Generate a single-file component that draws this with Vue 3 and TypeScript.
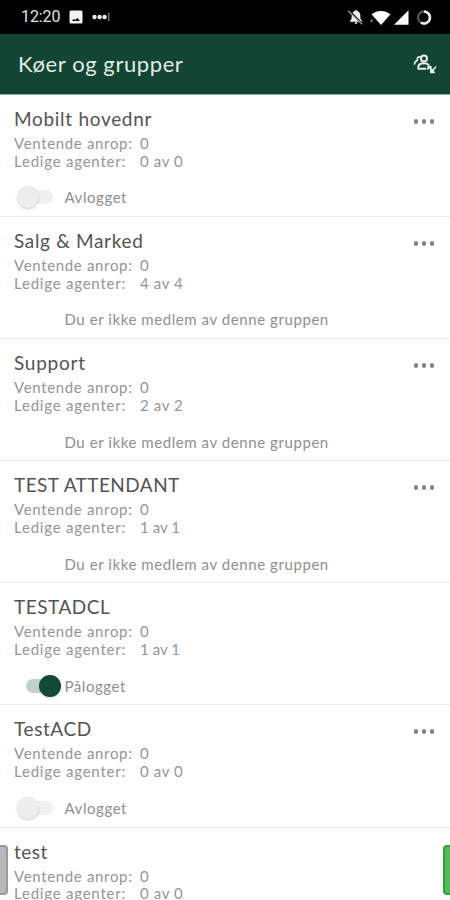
<script setup lang="ts">
type Membership = 'off' | 'on' | 'none'

interface Group {
  name: string
  waiting: string
  agents: string
  membership?: Membership
  menu: boolean
  spacing: number
}

const groups: Group[] = [
  { name: 'Mobilt hovednr', waiting: '0', agents: '0 av 0', membership: 'off', menu: true, spacing: 0.7 },
  { name: 'Salg & Marked', waiting: '0', agents: '4 av 4', membership: 'none', menu: true, spacing: 0.67 },
  { name: 'Support', waiting: '0', agents: '2 av 2', membership: 'none', menu: true, spacing: 0.75 },
  { name: 'TEST ATTENDANT', waiting: '0', agents: '1 av 1', membership: 'none', menu: true, spacing: 0.45 },
  { name: 'TESTADCL', waiting: '0', agents: '1 av 1', membership: 'on', menu: false, spacing: 0.5 },
  { name: 'TestACD', waiting: '0', agents: '0 av 0', membership: 'off', menu: true, spacing: 0.6 },
  { name: 'test', waiting: '0', agents: '0 av 0', menu: false, spacing: 0.5 },
]

const statusText: Record<Membership, string> = {
  off: 'Avlogget',
  on: 'Pålogget',
  none: 'Du er ikke medlem av denne gruppen',
}
</script>

<template>
  <div class="screen">
    <div class="statusbar">
      <span class="clock">12:20</span>
      <svg class="picture" width="14" height="14" viewBox="0 0 14 14">
        <rect x="0.5" y="0.5" width="13" height="13" rx="1.5" fill="#f4f4f4" />
        <path d="M3 11l1.800-2.300 1.500 1.300 2-2.300 2.700 3.300z" fill="#111" />
      </svg>
      <svg class="dots" width="19" height="12" viewBox="0 0 19 12">
        <circle cx="2.500" cy="6" r="2.200" fill="#eee" />
        <circle cx="7.600" cy="6" r="2.200" fill="#eee" />
        <circle cx="12.600" cy="6" r="2.200" fill="#eee" />
        <path d="M16.800 2v8" stroke="#aaa" stroke-width="1" />
      </svg>
      <svg class="system" width="86" height="18" viewBox="0 0 86 18">
        <path d="M3 12.800l1.600-2V7.500C4.600 5 6 3.300 8 2.900V2.200h2v.7c2 .4 3.400 2.100 3.400 4.600v3.300l1.600 2v.9H3zM7.600 14.300h2.800c0 1-.6 1.600-1.400 1.600s-1.400-.6-1.400-1.600z" fill="#eee" />
        <path d="M1.800 2.500l13.700 13.600" stroke="#000" stroke-width="1.800" />
        <path d="M1.200 2.900l14 13.400" stroke="#bbb" stroke-width="1.100" />
        <path d="M24.500 6.300C30 1.800 38 1.800 43.500 6.300L34 16.900z" fill="#fff" />
        <path d="M24.700 11.300v3M23.200 12.800h3" stroke="#888" stroke-width="1" />
        <path d="M61.500 2.300v14.500H47z" fill="#fff" />
        <circle cx="77" cy="9.500" r="6" fill="none" stroke="#555" stroke-width="2.300" />
        <path d="M77 3.500a6 6 0 1 1-3 11.200" fill="none" stroke="#eee" stroke-width="2.600" />
      </svg>
    </div>

    <header class="appbar">
      <h1>Køer og grupper</h1>
      <svg class="people" width="26" height="26" viewBox="0 0 26 26" fill="none" stroke="#e3eee8" stroke-width="2" stroke-linecap="round" stroke-linejoin="round">
        <circle cx="12" cy="6.400" r="3" />
        <path d="M8 4.800C6 4.600 4.900 6 5.500 7.700M5 8.600C3.300 9.300 2.600 10.500 2.500 12" stroke-width="1.700" />
        <path d="M13.500 16.700H6.300v-1.500c0-2.500 2.400-4 5.700-4 2 0 3.500.5 4.500 1.500" />
        <path d="M15.800 14.500h3v3.200M18.600 14.700l-3 2.300M23.800 15l-3.300 3.200M18.800 17.500v3h3.400" stroke-width="1.600" />
        <path d="M16 14.600h2.800v2.600zM19 17.700h2.800v2.800h-2.800z" fill="#e3eee8" stroke-width="0.800" />
      </svg>
    </header>

    <main class="list">
      <section v-for="group in groups" :key="group.name" class="group">
        <div class="heading">
          <h2 :style="{ letterSpacing: group.spacing + 'px' }">{{ group.name }}</h2>
          <span v-if="group.menu" class="more"><i /><i /><i /></span>
        </div>
        <dl class="facts">
          <dt>Ventende anrop:</dt>
          <dd>{{ group.waiting }}</dd>
          <dt class="agents">Ledige agenter:</dt>
          <dd :class="{ narrow: group.agents.startsWith('1') }">{{ group.agents }}</dd>
        </dl>
        <div v-if="group.membership" class="membership">
          <span class="slot">
            <span v-if="group.membership !== 'none'" class="toggle" :class="group.membership"><i /></span>
          </span>
          <span class="status">{{ statusText[group.membership] }}</span>
        </div>
      </section>
    </main>

    <span class="edge left" />
    <span class="edge right" />
  </div>
</template>

<style>
body {
  margin: 0;
  background: #fefefe;
}
</style>

<style scoped>
* {
  box-sizing: border-box;
}
.screen {
  position: relative;
  width: 450px;
  height: 900px;
  overflow: hidden;
  background: #fefefe;
  font-family: Lato, "Noto Sans", sans-serif;
}
.statusbar {
  display: flex;
  align-items: center;
  height: 34px;
  padding: 0 17px 0 21px;
  background: #000;
}
.clock {
  width: 48px;
  color: #e0e0e0;
  font: 400 16px/34px Roboto, sans-serif;
  letter-spacing: -0.1px;
}
.picture {
  margin-right: 9px;
}
.system {
  margin-left: auto;
}
.appbar {
  display: flex;
  align-items: center;
  justify-content: space-between;
  height: 61px;
  padding: 0 12px 0 18px;
  background: #124533;
  border-bottom: 1px solid #8fb0a3;
}
h1 {
  margin: 0;
  color: #e0ebe5;
  font-size: 22px;
  font-weight: 400;
  line-height: 30px;
  letter-spacing: 0.58px;
}
.people {
  position: relative;
  top: 1px;
}
.group {
  height: 122.100px;
  padding: 10px 14px 0;
  border-bottom: 1px solid #ececec;
}
.group:last-child {
  height: auto;
  border-bottom: 0;
}
.heading {
  display: flex;
  justify-content: space-between;
  height: 30px;
}
h2 {
  margin: 0;
  color: #545454;
  font-size: 19px;
  font-weight: 400;
  line-height: 27px;
  white-space: nowrap;
}
.more {
  display: flex;
  gap: 3.500px;
  height: 4px;
  margin: 14px 2px 0 0;
}
.more i {
  width: 4.500px;
  height: 4.500px;
  border-radius: 50%;
  background: #838383;
}
.facts {
  display: grid;
  grid-template-columns: 126px 1fr;
  margin: 0;
  color: #969696;
  font-size: 15px;
  line-height: 17.500px;
  letter-spacing: 0.660px;
  white-space: nowrap;
}
.facts .agents {
  letter-spacing: 0.780px;
}
.facts dd {
  margin: 0;
  letter-spacing: 0.600px;
}
.facts .narrow {
  letter-spacing: 0.050px;
}
.membership {
  display: flex;
  align-items: center;
  height: 24px;
  margin-top: 15.400px;
}
.slot {
  display: flex;
  width: 50.500px;
}
.status {
  color: #909090;
  font-size: 15px;
  line-height: 24px;
  letter-spacing: 0.570px;
  white-space: nowrap;
}
.toggle {
  display: flex;
  align-items: center;
  justify-content: flex-start;
  width: 27px;
  height: 14px;
  margin-left: 12px;
  border-radius: 7px;
  background: #f0f0f0;
}
.toggle i {
  flex: none;
  width: 22px;
  height: 22px;
  margin-left: -9px;
  border-radius: 50%;
  background: #ededed;
  box-shadow: 0 1px 2px rgba(0, 0, 0, 0.18);
}
.toggle.on {
  width: 34px;
  justify-content: flex-end;
  background: #c2d1ca;
}
.toggle.on i {
  margin: 0 -1px 0 0;
  background: #124a34;
}
.edge {
  position: absolute;
  top: 845px;
  height: 50px;
  background: #b8b8b8;
  border: 2px solid #999;
}
.left {
  left: -3px;
  width: 11px;
  border-radius: 0 4px 4px 0;
}
.right {
  right: -4px;
  width: 11px;
  background: #56b956;
  border-color: #32a23c;
  border-radius: 4px 0 0 4px;
}
</style>
